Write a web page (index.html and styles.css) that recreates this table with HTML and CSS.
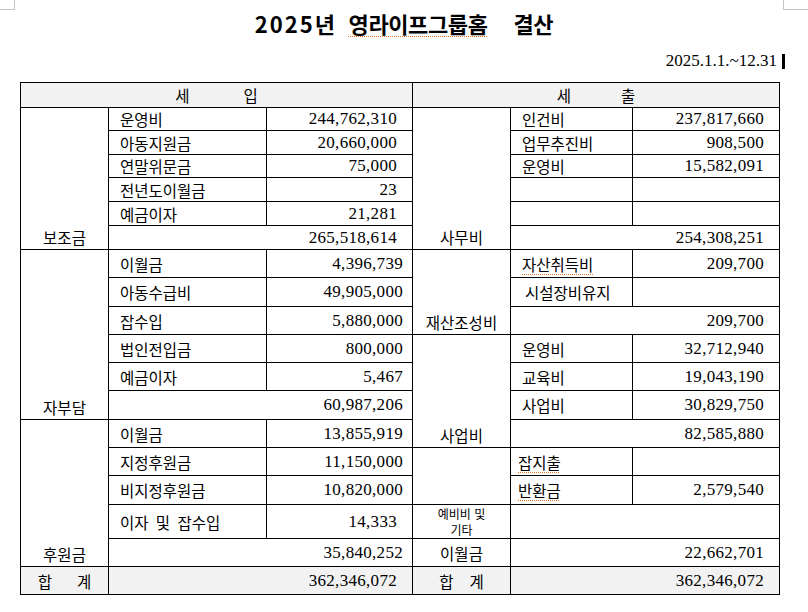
FILE: index.html
```html
<!DOCTYPE html>
<html lang="ko">
<head>
<meta charset="utf-8">
<title>2025년 영라이프그룹홈 결산</title>
<link rel="stylesheet" href="styles.css">
</head>
<body>
<div class="mark mark-l"></div>
<div class="mark mark-r"></div>
<div class="page">
  <h1 class="title"><span class="yr">2025</span>년<span class="t2 spell">영라이프그룹홈</span><span class="t3">결산</span></h1>
  <div class="date"><span>2025.1.1.~12.31</span><span class="caret"></span></div>
  <table class="sheet">
    <colgroup>
      <col class="c1"><col class="c2"><col class="c3"><col class="c4"><col class="c5"><col class="c6">
    </colgroup>
    <tr class="head r25">
      <td colspan="3"><span class="hs1">세</span><span>입</span></td>
      <td colspan="3"><span class="hs2">세</span><span>출</span></td>
    </tr>
    <tr class="r23">
      <td rowspan="6" class="cat">보조금</td>
      <td class="item">운영비</td><td class="num p15">244,762,310</td>
      <td rowspan="6" class="cat">사무비</td>
      <td class="item">인건비</td><td class="num p15">237,817,660</td>
    </tr>
    <tr class="r24">
      <td class="item">아동지원금</td><td class="num p15">20,660,000</td>
      <td class="item">업무추진비</td><td class="num p15">908,500</td>
    </tr>
    <tr class="r23">
      <td class="item">연말위문금</td><td class="num p15">75,000</td>
      <td class="item">운영비</td><td class="num p15">15,582,091</td>
    </tr>
    <tr class="r24">
      <td class="item">전년도이월금</td><td class="num p15">23</td>
      <td class="item"></td><td class="num"></td>
    </tr>
    <tr class="r24">
      <td class="item">예금이자</td><td class="num p15">21,281</td>
      <td class="item"></td><td class="num"></td>
    </tr>
    <tr class="r24">
      <td colspan="2" class="num p15">265,518,614</td>
      <td colspan="2" class="num p15">254,308,251</td>
    </tr>
    <tr class="r28">
      <td rowspan="6" class="cat">자부담</td>
      <td class="item">이월금</td><td class="num p9">4,396,739</td>
      <td rowspan="3" class="cat">재산조성비</td>
      <td class="item"><span class="spell">자산취득비</span></td><td class="num p15">209,700</td>
    </tr>
    <tr class="r29">
      <td class="item">아동수급비</td><td class="num p9">49,905,000</td>
      <td class="item ind">시설장비유지</td><td class="num"></td>
    </tr>
    <tr class="r28">
      <td class="item">잡수입</td><td class="num p9">5,880,000</td>
      <td colspan="2" class="num p15">209,700</td>
    </tr>
    <tr class="r28">
      <td class="item">법인전입금</td><td class="num p9">800,000</td>
      <td rowspan="4" class="cat">사업비</td>
      <td class="item">운영비</td><td class="num p15">32,712,940</td>
    </tr>
    <tr class="r28">
      <td class="item">예금이자</td><td class="num p9">5,467</td>
      <td class="item">교육비</td><td class="num p15">19,043,190</td>
    </tr>
    <tr class="r29">
      <td colspan="2" class="num p9">60,987,206</td>
      <td class="item">사업비</td><td class="num p15">30,829,750</td>
    </tr>
    <tr class="r28">
      <td rowspan="5" class="cat">후원금</td>
      <td class="item">이월금</td><td class="num p9">13,855,919</td>
      <td colspan="2" class="num p15">82,585,880</td>
    </tr>
    <tr class="r28">
      <td class="item">지정후원금</td><td class="num p9">11,150,000</td>
      <td rowspan="2" class="cat"></td>
      <td class="item tight"><span class="spell">잡지출</span></td><td class="num"></td>
    </tr>
    <tr class="r29">
      <td class="item">비지정후원금</td><td class="num p9">10,820,000</td>
      <td class="item tight"><span class="spell">반환금</span></td><td class="num p15">2,579,540</td>
    </tr>
    <tr class="r34">
      <td class="item spaced">이자 및 잡수입</td><td class="num p15">14,333</td>
      <td class="small">예비비 및<br>기타</td>
      <td colspan="2" class="num"></td>
    </tr>
    <tr class="r28">
      <td colspan="2" class="num p9">35,840,252</td>
      <td class="mid">이월금</td>
      <td colspan="2" class="num p15">22,662,701</td>
    </tr>
    <tr class="r28 total">
      <td class="mid"><span class="g1">합</span><span>계</span></td>
      <td colspan="2" class="num p15">362,346,072</td>
      <td class="mid"><span class="g2">합</span><span>계</span></td>
      <td colspan="2" class="num p15">362,346,072</td>
    </tr>
  </table>
</div>
</body>
</html>
```
FILE: styles.css
```css
html, body {
  margin: 0;
  padding: 0;
  background: #ffffff;
}
body {
  width: 808px;
  height: 612px;
  position: relative;
  overflow: hidden;
  font-family: "Noto Sans CJK KR", "Noto Sans", sans-serif;
  color: #000;
}
.mark {
  position: absolute;
  top: 0;
  height: 9px;
  border-bottom: 1px solid #c4c4c4;
}
.mark-l {
  left: 0;
  width: 14px;
  border-right: 1px solid #c4c4c4;
}
.mark-r {
  left: 783px;
  width: 25px;
  border-left: 1px solid #c4c4c4;
}
.page {
  padding: 0 0 0 20px;
}
.title {
  margin: 8px 0 0 0;
  height: 30px;
  line-height: 30px;
  text-align: center;
  font-size: 22px;
  font-weight: 700;
  letter-spacing: -0.4px;
  padding-right: 20px;
}
.title .yr {
  letter-spacing: 2px;
}
.title .t2 {
  margin-left: 14px;
}
.title .t3 {
  margin-left: 26px;
}
.spell {
  text-decoration: underline dotted #e8701a;
  text-decoration-thickness: 1px;
  text-underline-offset: 3px;
}
.date {
  margin-top: 8px;
  height: 30px;
  line-height: 30px;
  display: flex;
  justify-content: flex-end;
  align-items: center;
  padding-right: 23px;
  font-family: "Liberation Serif", serif;
  font-size: 17px;
}
.caret {
  display: inline-block;
  width: 3px;
  height: 15px;
  background: #000;
  margin-left: 5px;
}
.sheet {
  margin-top: 6px;
  border-collapse: collapse;
  table-layout: fixed;
  width: 759px;
  font-size: 15.5px;
}
.c1 { width: 88px; }
.c2 { width: 158px; }
.c3 { width: 146px; }
.c4 { width: 98px; }
.c5 { width: 122px; }
.c6 { width: 147px; }
.sheet td {
  border: 1px solid #000;
  padding: 0;
  line-height: 18px;
  vertical-align: middle;
  white-space: nowrap;
}
.r25 { height: 25px; }
.r23 { height: 23px; }
.r24 { height: 24px; }
.r28 { height: 28px; }
.r29 { height: 29px; }
.r34 { height: 34px; }
.head td {
  background: #f2f2f2;
  text-align: center;
}
.hs1 { margin-right: 54px; }
.hs2 { margin-right: 50px; }
.cat {
  text-align: center;
  vertical-align: bottom !important;
  padding-bottom: 3px !important;
}
.mid {
  text-align: center;
}
.item {
  padding-left: 11px !important;
}
.item.ind {
  padding-left: 14px !important;
}
.item.tight {
  padding-left: 7px !important;
}
.spaced {
  word-spacing: 3px;
}
.num {
  text-align: right;
  font-family: "Liberation Serif", serif;
  font-size: 17px;
  letter-spacing: 0.3px;
}
.p15 { padding-right: 15px !important; }
.p9 { padding-right: 9px !important; }
.small {
  text-align: center;
  font-size: 12px;
  line-height: 16px !important;
  padding-top: 1px !important;
}
.total td {
  background: #f2f2f2;
}
.g1 { margin-right: 25px; }
.g2 { margin-right: 16px; }
```
